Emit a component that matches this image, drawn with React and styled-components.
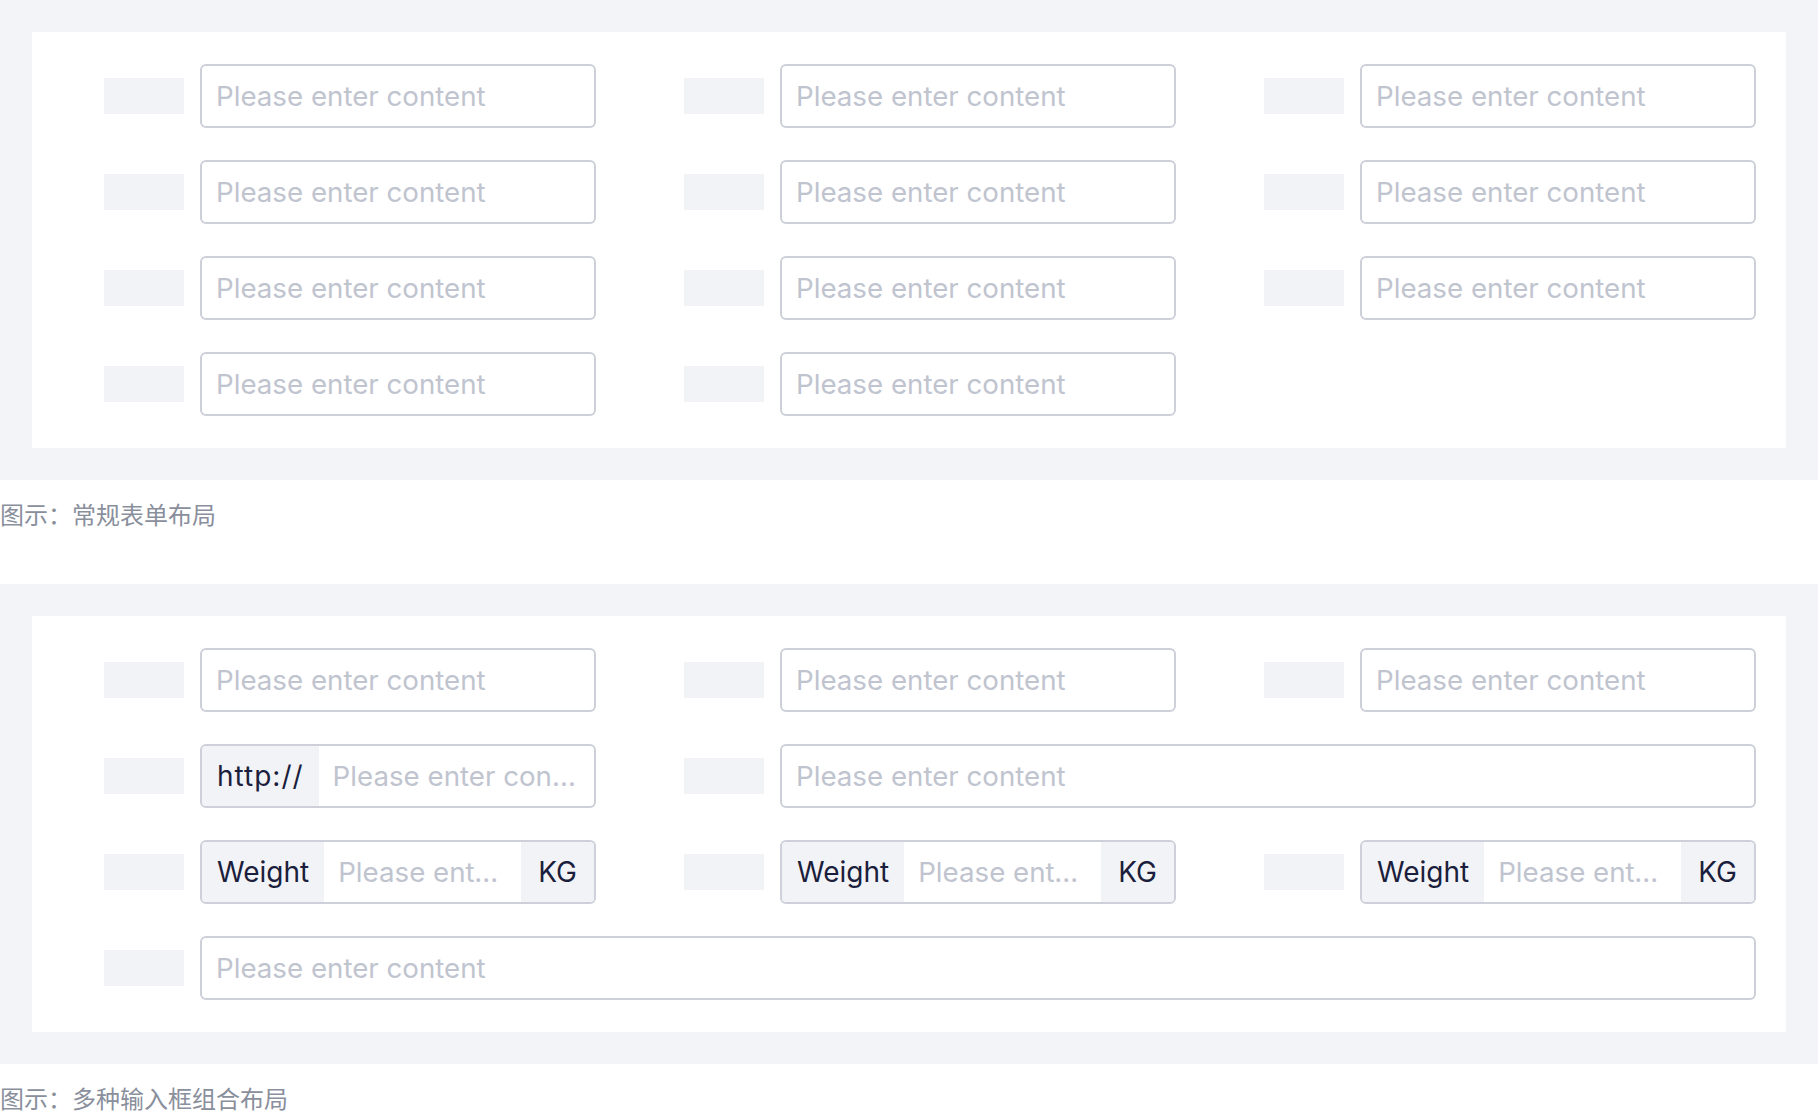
import React from "react";
import styled, { createGlobalStyle } from "styled-components";

const GlobalStyle = createGlobalStyle`
  html, body {
    margin: 0;
    padding: 0;
    background: #ffffff;
    overflow: hidden;
  }
  body {
    font-family: Inter, "Noto Sans CJK SC", sans-serif;
  }
`;

const Page = styled.div`
  display: flex;
  flex-direction: column;
  width: 1818px;
`;

const Panel = styled.div`
  background: #f3f4f8;
  padding: 32px;
`;

const Card = styled.div`
  background: #ffffff;
  padding: 32px 30px 32px 72px;
  display: grid;
  grid-template-columns: repeat(3, 492px);
  column-gap: 88px;
  row-gap: 32px;
`;

const Caption = styled.div`
  height: 104px;
  box-sizing: border-box;
  padding-top: 16px;
  font-family: "Noto Sans CJK SC", sans-serif;
  font-size: 24px;
  line-height: 36px;
  color: #8a8f9c;
`;

const Field = styled.div`
  display: flex;
  align-items: center;
  gap: 16px;
  grid-column: span ${(p) => p.$span || 1};
  min-width: 0;
`;

const LabelBlock = styled.div`
  flex-shrink: 0;
  width: 80px;
  height: 36px;
  background: #f2f3f7;
`;

const Control = styled.div`
  flex: 1;
  min-width: 0;
  height: 64px;
  box-sizing: border-box;
  display: flex;
  border: 2px solid #cdd0d8;
  border-radius: 6px;
  overflow: hidden;
  background: #ffffff;
`;

const Input = styled.input`
  flex: 1;
  min-width: 0;
  border: none;
  outline: none;
  background: transparent;
  padding: 0 14px;
  font-family: Inter, sans-serif;
  font-size: 27.7px;
  color: #1d2040;
  text-overflow: ellipsis;
  &::placeholder {
    color: #c0c4cf;
  }
`;

const Addon = styled.div`
  flex-shrink: 0;
  display: flex;
  align-items: center;
  padding: 0 ${(p) => p.$pad || 15}px;
  background: #f2f3f7;
  font-size: 28px;
  color: #1b1e3c;
  letter-spacing: ${(p) => p.$spacing || 0}px;
`;

const FormField = ({ span, prefix, suffix }) => (
  <Field $span={span}>
    <LabelBlock />
    <Control>
      {prefix && (
        <Addon $pad={15} $spacing={prefix === "http://" ? 1 : 0}>
          {prefix}
        </Addon>
      )}
      <Input placeholder="Please enter content" />
      {suffix && <Addon $pad={17}>{suffix}</Addon>}
    </Control>
  </Field>
);

export default function App() {
  return (
    <>
      <GlobalStyle />
      <Page>
        <Panel>
          <Card>
            {Array.from({ length: 11 }).map((_, i) => (
              <FormField key={i} />
            ))}
          </Card>
        </Panel>
        <Caption>图示：常规表单布局</Caption>
        <Panel>
          <Card>
            <FormField />
            <FormField />
            <FormField />
            <FormField prefix="http://" />
            <FormField span={2} />
            <FormField prefix="Weight" suffix="KG" />
            <FormField prefix="Weight" suffix="KG" />
            <FormField prefix="Weight" suffix="KG" />
            <FormField span={3} />
          </Card>
        </Panel>
        <Caption>图示：多种输入框组合布局</Caption>
      </Page>
    </>
  );
}
